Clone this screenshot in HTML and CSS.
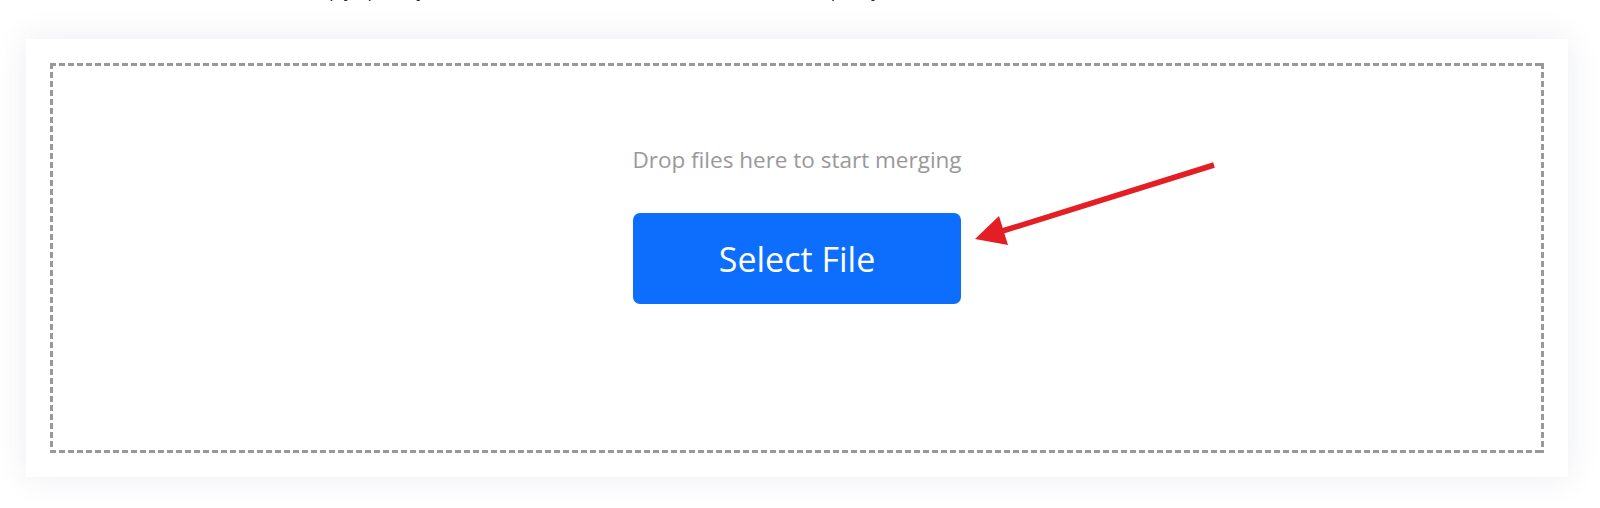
FILE: index.html
```html
<!DOCTYPE html>
<html lang="en">
<head>
<meta charset="utf-8">
<title>Merge PDF</title>
<link rel="stylesheet" href="styles.css">
</head>
<body>
<p class="intro">Simply upload your PDF files to combine them into one document quickly.</p>
<div class="card">
  <div class="dropzone">
    <p class="hint">Drop files here to start merging</p>
    <button class="btn">Select File</button>
  </div>
  <svg class="arrow" width="270" height="110" viewBox="0 0 270 110">
    <line x1="254" y1="15" x2="36" y2="83" stroke="#e31e24" stroke-width="5.5"/>
    <polygon points="15,89 39,66 48,95" fill="#e31e24"/>
  </svg>
</div>
</body>
</html>
```
FILE: styles.css
```css
html, body {
  margin: 0;
  padding: 0;
  background: #fff;
}
body {
  font-family: "Open Sans", "Noto Sans", sans-serif;
  height: 508px;
  overflow: hidden;
}
.intro {
  margin: -20px 0 0 300px;
  height: 22px;
  font-size: 17px;
  line-height: 21px;
  color: #212529;
  white-space: nowrap;
}
.card {
  position: relative;
  margin: 37px 0 0 26px;
  width: 1542px;
  height: 438px;
  box-sizing: border-box;
  padding: 24px;
  background: #fff;
  box-shadow: 0 0 32px rgba(40, 50, 110, 0.09);
}
.dropzone {
  height: 390px;
  box-sizing: border-box;
  background:
    linear-gradient(to right, #999 6px, transparent 6px) left top / 9px 3px repeat-x,
    linear-gradient(to right, #999 6px, transparent 6px) left bottom / 9px 3px repeat-x,
    linear-gradient(to bottom, #999 6px, transparent 6px) left top / 3px 9px repeat-y,
    linear-gradient(to bottom, #999 6px, transparent 6px) right top / 3px 9px repeat-y;
  display: flex;
  flex-direction: column;
  align-items: center;
  padding-top: 82px;
}
.hint {
  margin: 0;
  font-size: 22.5px;
  line-height: 30px;
  color: #999;
}
.btn {
  margin-top: 38px;
  width: 328px;
  height: 91px;
  border: none;
  border-radius: 7px;
  background: #0d6efd;
  color: #fff;
  font-family: "Open Sans", "Noto Sans", sans-serif;
  font-size: 34px;
  cursor: pointer;
}
.arrow {
  position: absolute;
  left: 934px;
  top: 111px;
}
```
